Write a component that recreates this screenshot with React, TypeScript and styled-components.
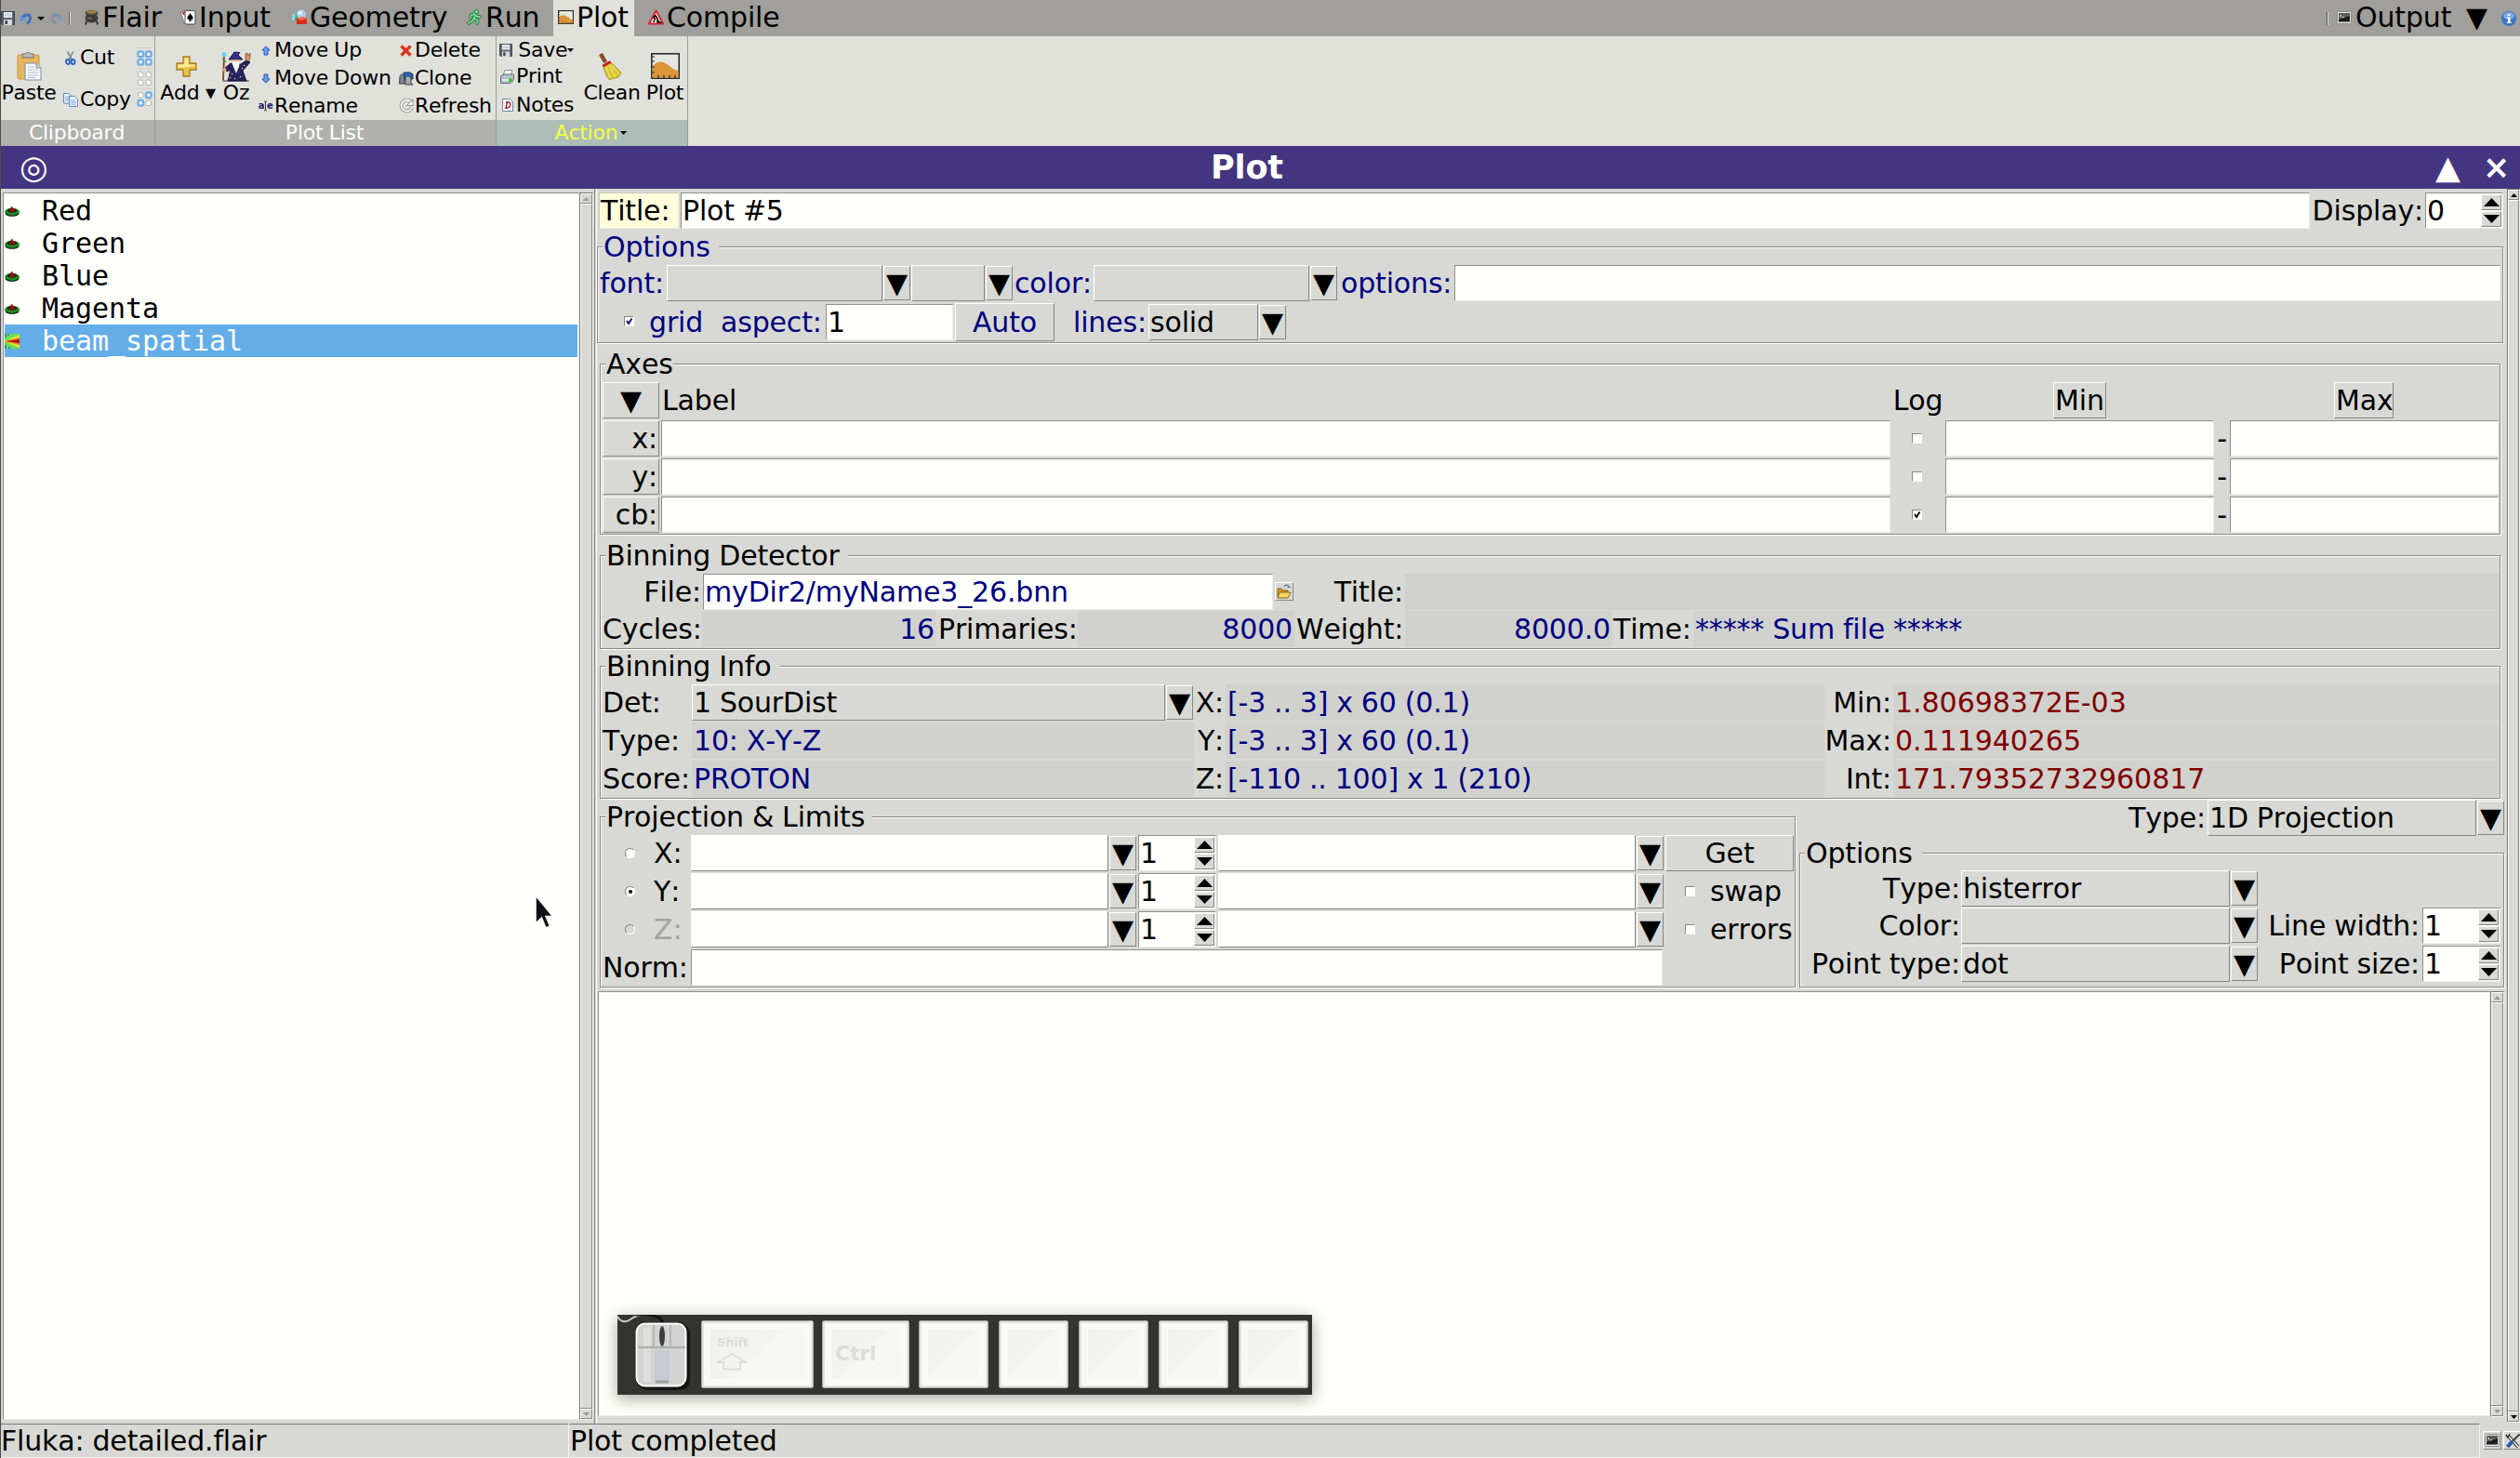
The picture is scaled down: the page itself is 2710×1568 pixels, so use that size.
import type { ReactNode } from 'react';
import styled, { createGlobalStyle, css } from 'styled-components';

const bg = '#d8d9d5';
const paper = '#fffffb';
const dark = '#868682';
const navy = '#000080';
const maroon = '#800000';

const GlobalStyle = createGlobalStyle`
  * {
    box-sizing: border-box;
  }

  body {
    margin: 0;
    background: ${bg};
    overflow: hidden;
  }
`;

type Box = {
  $w?: number;
  $ml?: number;
  $mt?: number;
  $h?: number;
  $color?: string;
  $right?: boolean;
  $center?: boolean;
};

const box = css<Box>`
  flex: none;
  ${({ $w }) => $w !== undefined && `width: ${$w}px;`}
  ${({ $h }) => $h !== undefined && `height: ${$h}px;`}
  margin-left: ${({ $ml }) => $ml ?? 0}px;
  margin-top: ${({ $mt }) => $mt ?? 0}px;
`;

const Window = styled.div`
  position: relative;
  display: flex;
  flex-direction: column;
  width: 2710px;
  height: 1568px;
  border-left: 1px solid #4a4a4a;
  background: ${bg};
  color: #000;
  font-family: 'DejaVu Sans', sans-serif;
  font-size: 30px;
  font-kerning: none;
  letter-spacing: -0.16px;
  word-spacing: -0.4px;
  line-height: 35px;
  white-space: pre;
`;

/* tabs */

const TabBar = styled.div`
  display: flex;
  align-items: center;
  height: 39px;
  padding-right: 4px;
  background: #a09f9b;
`;

const Tab = styled.div<{ $w: number; $ml?: number; $active?: boolean }>`
  display: flex;
  align-items: center;
  flex: none;
  width: ${({ $w }) => $w}px;
  height: 39px;
  margin-left: ${({ $ml }) => $ml ?? 0}px;
  padding: 0 0 2px 5px;
  gap: 3px;
  background: ${({ $active }) => ($active ? '#e1e1dc' : 'transparent')};
`;

const TabText = styled.div<Box>`
  ${box}
  padding-bottom: 2px;
`;

const Icon = styled.svg<Box>`
  display: block;
  ${box}
`;

const ArrowSlot = styled.div`
  display: flex;
  margin: 0 -1px 0 5px;
`;

const Separator = styled.div<Box>`
  ${box}
  width: 2px;
  height: 14px;
  border-left: 1px solid #555;
  border-right: 1px solid #e4e4e0;
`;

const Spacer = styled.div`
  flex: 1;
`;

/* ribbon */

const Ribbon = styled.div`
  display: flex;
  height: 118px;
  background: #e1e1dc;
  font-size: 22px;
  letter-spacing: -0.25px;
  line-height: 26px;
`;

const Group = styled.div<{ $w: number }>`
  display: flex;
  flex-direction: column;
  flex: none;
  width: ${({ $w }) => $w}px;
  border-right: 1px solid #9c9c98;
`;

const GroupBody = styled.div`
  display: flex;
  height: 90px;
`;

const GroupLabel = styled.div<{ $action?: boolean }>`
  display: flex;
  align-items: center;
  justify-content: center;
  gap: 3px;
  height: 28px;
  padding: 0 2px 1px 0;
  background: ${({ $action }) => ($action ? '#adbdb8' : '#b0b0ad')};
  color: ${({ $action }) => ($action ? '#f2ff3c' : paper)};
`;

const BigButton = styled.div<Box>`
  ${box}
  display: flex;
  flex-direction: column;
  align-items: center;
`;

const BigIcon = styled.div<{ $shift?: number }>`
  display: flex;
  align-items: center;
  justify-content: center;
  height: 34px;
  margin-top: 15px;
  margin-bottom: -1px;
  padding-right: ${({ $shift }) => $shift ?? 0}px;
`;

const ButtonColumn = styled.div<Box>`
  ${box}
  display: flex;
  flex-direction: column;
`;

const SmallButton = styled.div<Box>`
  ${box}
  display: flex;
  align-items: center;
  height: 26px;
`;

const IconSlot = styled.div<{ $w: number }>`
  display: flex;
  align-items: center;
  justify-content: center;
  flex: none;
  width: ${({ $w }) => $w}px;
`;

const SelectTool = styled.div`
  display: flex;
  align-items: center;
  justify-content: center;
  width: 18px;
  height: 22px;
  border-top: 1px solid #d2d2ce;
`;

/* title bar */

const TitleBar = styled.div`
  display: flex;
  align-items: center;
  height: 46px;
  background: #443580;
  color: ${paper};
  font-size: 35px;
  line-height: 41px;
`;

const TitleText = styled.div<Box>`
  ${box}
  font-weight: bold;
  ${({ $center }) => $center && 'text-align: center;'}
`;

const TitleGlyph = styled.div<Box>`
  ${box}
`;

/* body */

const Body = styled.div`
  display: flex;
  height: 1328px;
`;

const List = styled.div`
  width: 620px;
  height: 1320px;
  margin: 4px 0 0 2px;
  padding: 1px;
  border: 1px solid;
  border-color: #8f8f8b #ececea #ececea #8f8f8b;
  background: ${paper};
  font-family: 'DejaVu Sans Mono', monospace;
  letter-spacing: -0.06px;
  word-spacing: 0;
`;

const ListItem = styled.div<{ $selected?: boolean }>`
  display: flex;
  align-items: center;
  height: 35px;
  gap: 24px;
  background: ${({ $selected }) => ($selected ? '#63ade8' : 'transparent')};
  color: ${({ $selected }) => ($selected ? paper : '#000')};
`;

const Track = styled.div<Box>`
  ${box}
  display: flex;
  flex-direction: column;
  border: 1px solid;
  border-color: #777 #f4f4f0 #f4f4f0 #777;
  background: #c9cac6;
`;

const raised = css`
  border: 1px solid;
  border-color: ${paper} ${dark} ${dark} ${paper};
  background: ${bg};
`;

const TrackButton = styled.div`
  display: flex;
  align-items: center;
  justify-content: center;
  flex: none;
  height: 11px;
  ${raised}
`;

const Thumb = styled.div`
  flex: 1;
  ${raised}
`;

const Sash = styled.div`
  width: 3px;
  margin: 0 1px;
  border-left: 1px solid ${dark};
  border-right: 1px solid ${paper};
`;

const Pane = styled.div`
  display: flex;
  flex-direction: column;
  width: 2053px;
`;

const Row = styled.div<Box>`
  ${box}
  display: flex;
  height: ${({ $h }) => $h ?? 39}px;
`;

const Label = styled.div<Box>`
  ${box}
  height: 39px;
  padding: 2px 0;
  color: ${({ $color }) => $color ?? 'inherit'};
  text-align: ${({ $right, $center }) => ($right ? 'right' : $center ? 'center' : 'left')};
`;

const Entry = styled.div<Box>`
  ${box}
  height: ${({ $h }) => $h ?? 39}px;
  padding: 1px 1px;
  border: 1px solid;
  border-color: #8f8f8b #ececea #ececea #8f8f8b;
  background: ${paper};
  color: ${({ $color }) => $color ?? 'inherit'};
`;

const TitleLabel = styled(Entry)`
  background: #fffedb;
  border-color: #c9c9c0 #ecece0 #ecece0 #c9c9c0;
`;

const Value = styled.div<Box>`
  ${box}
  height: 39px;
  padding: 2px 2px;
  background: #d1d2ce;
  color: ${({ $color }) => $color ?? navy};
  text-align: ${({ $right }) => ($right ? 'right' : 'left')};
`;

const StatValue = styled(Value)`
  color: ${maroon};
  letter-spacing: -0.04px;
`;

const Button = styled.div<Box>`
  ${box}
  height: ${({ $h }) => $h ?? 39}px;
  padding: ${({ $h }) => (($h ?? 39) - 37) / 2}px 1px;
  ${raised}
  color: ${({ $color }) => $color ?? 'inherit'};
  text-align: ${({ $right }) => ($right ? 'right' : 'center')};
`;

const ComboText = styled.div<Box & { $edit?: boolean }>`
  ${box}
  height: 39px;
  padding: 1px 1px;
  ${raised}
  ${({ $edit }) => $edit && `background: ${paper};`}
`;

const ComboArrow = styled.div`
  flex: none;
  width: 29px;
  height: 37px;
  margin: 1px 0 0 1px;
  padding-left: 2px;
  ${raised}
`;

const SpinBox = styled(Entry)`
  display: flex;
  justify-content: space-between;
`;

const SpinButtons = styled.div`
  display: flex;
  flex-direction: column;
  width: 22px;
  gap: 1px;
`;

const SpinButton = styled.div`
  display: flex;
  align-items: center;
  justify-content: center;
  height: 17px;
  ${raised}
`;

const Frame = styled.div<Box>`
  ${box}
  border: 1px solid ${dark};
  box-shadow: inset 1px 1px ${paper}, 1px 1px ${paper};
`;

const Legend = styled.div<Box>`
  width: ${({ $w }) => $w}px;
  height: 35px;
  margin: -18px 0 2px 5px;
  padding-left: 1px;
  background: ${bg};
  color: ${({ $color }) => $color ?? 'inherit'};
`;

const CheckBox = styled.div<Box>`
  ${box}
  width: 11px;
  height: 11px;
  border: 1px solid;
  border-color: ${dark} ${paper} ${paper} ${dark};
  background: ${paper};
`;

const Radio = styled.div<Box & { $off?: boolean }>`
  ${box}
  display: flex;
  align-items: center;
  justify-content: center;
  width: 11px;
  height: 11px;
  border: 1px solid;
  border-color: ${dark} ${paper} ${paper} ${dark};
  border-radius: 50%;
  background: ${({ $off }) => ($off ? bg : paper)};
`;

const RadioDot = styled.div`
  width: 4px;
  height: 4px;
  border-radius: 50%;
  background: #000;
`;

const FileButton = styled.div`
  display: flex;
  width: 20px;
  height: 20px;
  margin: 9px 0 0 2px;
  ${raised}
`;

const Columns = styled.div`
  display: flex;
`;

const StyleColumn = styled.div`
  display: flex;
  flex-direction: column;
  width: 760px;
  margin-left: 4px;
`;

const StatusBar = styled.div`
  display: flex;
  height: 37px;
`;

const StatusField = styled.div<Box>`
  ${box}
  height: 37px;
  border: 1px solid;
  border-color: #777 #f4f4f0 #f4f4f0 ${bg};
  border-left-width: 0;
`;

const StatusButton = styled.div<Box>`
  ${box}
  display: flex;
  align-items: center;
  justify-content: center;
  width: 20px;
  height: 20px;
  ${raised}
`;

/* key monitor floating over the window */

const KeyMonitor = styled.div`
  position: absolute;
  left: 663px;
  top: 1414px;
  display: flex;
  width: 747px;
  height: 86px;
  background: #33342f;
  box-shadow: 0 4px 16px rgba(60, 60, 50, 0.45);
`;

const Key = styled.div<Box>`
  ${box}
  height: 73px;
  margin-top: 6px;
  padding: 15px 0 0 16px;
  border: 1px solid #a9aaa5;
  border-radius: 2px;
  background: linear-gradient(135deg, #efefec 0%, #f3f4ef 45%, #f7f8f3 52%, #f6f7f2 100%);
  box-shadow: inset 0 0 0 2px #e3e4df, inset 0 0 0 9px #f9faf5;
  color: #dddeda;
  font-size: 13px;
  font-weight: bold;
  line-height: 15px;
`;

const CtrlText = styled.div`
  padding-top: 7px;
  margin-left: -3px;
  font-size: 22px;
  line-height: 26px;
`;

const Pointer = styled.svg`
  position: absolute;
  left: 573px;
  top: 961px;
`;

const Triangle = ({ w, h, up, color = '#000' }: { w: number; h: number; up?: boolean; color?: string }) => (
  <svg width={w} height={h} viewBox="0 0 10 10" preserveAspectRatio="none">
    <path d={up ? 'M0 10L5 0L10 10Z' : 'M0 0H10L5 10Z'} fill={color} />
  </svg>
);

const Check = ({ color = '#000' }: { color?: string }) => (
  <Icon width="9" height="9" viewBox="0 0 9 9">
    <path d="M2 4L4 7L7.5 1.5" fill="none" stroke={color} strokeWidth="1.8" />
  </Icon>
);

const Combo = ({ w, ml, text, edit }: { w: number; ml?: number; text?: string; edit?: boolean }) => (
  <>
    <ComboText $w={w} $ml={ml} $edit={edit}>{text}</ComboText>
    <ComboArrow>▼</ComboArrow>
  </>
);

const Spin = ({ w, ml, value }: { w: number; ml?: number; value: string }) => (
  <SpinBox $w={w} $ml={ml}>
    {value}
    <SpinButtons>
      <SpinButton><Triangle w={17} h={9} up /></SpinButton>
      <SpinButton><Triangle w={17} h={9} /></SpinButton>
    </SpinButtons>
  </SpinBox>
);

const Scrollbar = ({ w, h, ml, mt, color }: { w: number; h: number; ml?: number; mt?: number; color: string }) => (
  <Track $w={w} $h={h} $ml={ml} $mt={mt}>
    <TrackButton><Triangle w={7} h={4} up color={color} /></TrackButton>
    <Thumb />
    <TrackButton><Triangle w={7} h={4} color={color} /></TrackButton>
  </Track>
);

/* icons */

const SaveIcon = ({ s = 15 }: { s?: number }) => (
  <Icon width={s} height={s} viewBox="0 0 15 15">
    <path d="M0.5 0.5H14.5V14.5H1.5L0.5 13.5Z" fill="#5b6068" stroke="#3c4046" />
    <rect x="3" y="1" width="9" height="6" fill="#f4f6f8" />
    <path d="M4 3H11M4 5H11" stroke="#9fb4c8" />
    <rect x="3" y="9" width="9" height="6" fill="#d5d8db" />
    <rect x="4.5" y="10" width="2.5" height="4" fill="#3c4046" />
  </Icon>
);

const UndoIcon = ({ redo }: { redo?: boolean }) => (
  <Icon width="14" height="14" viewBox="0 0 14 14" $ml={redo ? 7 : 5}>
    <g transform={redo ? 'matrix(-1 0 0 1 14 0)' : undefined} opacity={redo ? 0.75 : 1}>
      <path
        d="M3 7C5 2 11 1.5 11.5 6C12 9 10 11.5 7.5 12"
        fill="none"
        stroke={redo ? '#6584ac' : '#3c6fc4'}
        strokeWidth="3"
        strokeDasharray={redo ? '2 1' : undefined}
      />
      <path d="M0.5 3L1 10L7.5 8Z" fill={redo ? '#7c9cc0' : '#5e93e0'} />
    </g>
  </Icon>
);

const PotIcon = () => (
  <Icon width="17" height="17" viewBox="0 0 17 17">
    <path d="M3 13L2 16.5M14 13L15 16.5" stroke="#222" strokeWidth="1.8" />
    <path d="M1.5 4H15.500L14 6.5C17 9 15 14.500 8.500 14.500C2 14.500 0 9 3 6.500Z" fill="#3b3a35" />
    <ellipse cx="8.5" cy="3.500" rx="7" ry="2.500" fill="#55534a" />
    <ellipse cx="8.5" cy="3" rx="5" ry="1.500" fill="#a0823a" />
    <path d="M3.500 9.500H9" stroke="#77756c" strokeWidth="1.500" />
  </Icon>
);

const CardsIcon = () => (
  <Icon width="17" height="17" viewBox="0 0 17 17">
    <path d="M0.5 3L7 0.5L9 13L4 15Z" fill="#fff" stroke="#444" strokeWidth="0.6" />
    <path d="M1.5 3.5L5 2L4 7Z" fill="#d3202f" />
    <rect x="5" y="1.5" width="11" height="14.5" rx="1.5" fill="#fff" stroke="#222" strokeWidth="0.8" />
    <path d="M10.5 4C12 7 14 7.5 13.5 10C13 11.5 11.5 11.5 11 10.5L11.8 13H9.2L10 10.5C9.5 11.5 8 11.5 7.5 10C7 7.5 9 7 10.5 4Z" fill="#000" />
  </Icon>
);

const GeometryIcon = () => (
  <Icon width="17" height="17" viewBox="0 0 17 17">
    <path d="M1 6L5 4L8 6V13L1 12Z" fill="#37b24a" />
    <path d="M1 6L5 4L4 12L1 12Z" fill="#8ed0e8" />
    <circle cx="11" cy="5.5" r="5" fill="#a8d4f2" />
    <circle cx="9.5" cy="4" r="2" fill="#e6f5ff" />
    <path d="M6 10L12 8L17 10V16H6Z" fill="#dd2c1c" />
    <path d="M6 10L12 8L17 10L11 12Z" fill="#ff6a4c" />
  </Icon>
);

const RunIcon = () => (
  <Icon width="17" height="17" viewBox="0 0 17 17">
    <g fill="none" strokeLinecap="round" strokeLinejoin="round">
      <path d="M9 5L8 10L12 12L11 15M8 10L5 13L2 15M9 5L5 6L4 9M9 5L11 8L14 8" stroke="#276b3c" strokeWidth="3.4" />
      <path d="M9 5L8 10L12 12L11 15M8 10L5 13L2 15M9 5L5 6L4 9M9 5L11 8L14 8" stroke="#6fdc92" strokeWidth="1.9" />
    </g>
    <circle cx="10.5" cy="2.5" r="2.2" fill="#6fdc92" stroke="#276b3c" strokeWidth="0.8" />
  </Icon>
);

const PlotIcon = ({ w = 17, h = 15 }: { w?: number; h?: number }) => (
  <Icon width={w} height={h} viewBox="0 0 31 28" preserveAspectRatio="none">
    <rect x="0.8" y="0.8" width="29.4" height="26.4" fill="#e6e6e2" stroke="#222" strokeWidth={w < 20 ? 2.4 : 1.5} />
    <path d="M1.5 15C6 9 11 8 17 12C22 15 25 19 29.5 19V26.5H1.5Z" fill="#dc9537" />
    <path d="M1 9H4M1 15H4M1 21H4M8 27V24M14 27V24M20 27V24M26 27V24M1 4H4" stroke="#222" strokeWidth="1.2" />
  </Icon>
);

const CompileIcon = () => (
  <Icon width="17" height="17" viewBox="0 0 17 17">
    <path d="M8.5 1.5L16 15.5H1Z" fill="#fff" stroke="#d8242a" strokeWidth="2" strokeLinejoin="round" />
    <path d="M8 6L6 9L7.5 10.5L5.5 14M8 7L10 10L11 14M10 12L13 14H10Z" fill="none" stroke="#000" strokeWidth="1.5" />
  </Icon>
);

const TerminalIcon = ({ s = 16, ml }: { s?: number; ml?: number }) => (
  <Icon width={s} height={s * 0.88} viewBox="0 0 16 14" $ml={ml}>
    <rect x="0.5" y="0.5" width="15" height="13" rx="1" fill="#e8e8e6" stroke="#888" />
    <rect x="2" y="2" width="12" height="9.5" fill="#1c1e1c" />
    <path d="M2 2H14V5L2 9Z" fill="#5a5c5a" />
    <path d="M3.5 4L5 5L3.5 6M6 6.5H8" stroke="#fff" strokeWidth="0.8" fill="none" />
  </Icon>
);

const InfoIcon = () => (
  <Icon width="16" height="16" viewBox="0 0 16 16">
    <circle cx="8" cy="8" r="8" fill="#3f74c4" />
    <ellipse cx="8" cy="5" rx="6" ry="4" fill="#7fa9e2" />
    <path d="M7 3H9.5V5H7ZM6 6.5H9.5V11.5H10.5V13H6V11.5H7V8H6Z" fill="#fff" />
  </Icon>
);

const PasteIcon = () => (
  <Icon width="27" height="31" viewBox="0 0 27 31">
    <rect x="1" y="3" width="23" height="26" rx="1.5" fill="#e6b75a" stroke="#c8923a" />
    <path d="M6 2H9C10 -0.3 14 -0.3 15 2H18V6H6Z" fill="#b9bbb8" stroke="#6e706d" />
    <path d="M9 12H21L26 17V30H9Z" fill="#f3f6f8" stroke="#7a8fa0" />
    <path d="M21 12V17H26" fill="#cfdbe4" stroke="#7a8fa0" />
    <path d="M12 16H19M12 19H23M12 22H23M12 25H23M12 27.5H20" stroke="#b4c3cf" />
  </Icon>
);

const CutIcon = () => (
  <Icon width="12" height="15" viewBox="0 0 12 15">
    <path d="M2.5 0.5L7.5 9.5M8.5 0.5L4 9.5" stroke="#7b8892" strokeWidth="1.6" />
    <ellipse cx="3" cy="11.5" rx="2" ry="2.5" fill="none" stroke="#2f62c0" strokeWidth="1.9" />
    <ellipse cx="8.5" cy="11.5" rx="2" ry="2.5" fill="none" stroke="#2f62c0" strokeWidth="1.9" />
  </Icon>
);

const CopyIcon = () => (
  <Icon width="17" height="15" viewBox="0 0 17 15">
    <path d="M0.5 0.5H6L9 3.5V11H0.5Z" fill="#eef4fb" stroke="#5f86c0" />
    <path d="M2 4H6M2 6H6M2 8H6" stroke="#7fa3d6" />
    <path d="M6.5 3.5H12L15.5 7V14.5H6.5Z" fill="#eef4fb" stroke="#5f86c0" />
    <path d="M8 8H13M8 10H14M8 12H14" stroke="#7fa3d6" />
  </Icon>
);

const SquaresIcon = ({ on }: { on: number[] }) => (
  <Icon width="17" height="17" viewBox="0 0 17 17">
    {[0, 1, 2, 3].map((i) => {
      const active = on.includes(i);
      return (
        <rect
          key={i}
          x={(i % 2) * 8.5 + 1.5}
          y={Math.floor(i / 2) * 8.5 + 1.5}
          width="5.5"
          height="5.5"
          rx="1.5"
          fill="#fff"
          stroke={active ? '#74aee6' : '#b0b0ac'}
          strokeWidth={active ? 2.4 : 1}
        />
      );
    })}
  </Icon>
);

const AddIcon = () => (
  <Icon width="23" height="23" viewBox="0 0 23 23">
    <path d="M8 1H15V8H22V15H15V22H8V15H1V8H8Z" fill="#ecc347" stroke="#a57b1c" strokeWidth="1.3" />
    <path d="M9.5 2.5H13.5V9.5H20.5V11L2.5 13V9.5H9.5Z" fill="#fbeea4" />
  </Icon>
);

const WizardIcon = () => (
  <Icon width="32" height="33" viewBox="0 0 32 33">
    <path d="M3 6L2 31" stroke="#7d4a20" strokeWidth="1.8" />
    <circle cx="3" cy="3.5" r="2.5" fill="#63d5ea" />
    <path d="M1 8L5 12" stroke="#3b9b46" strokeWidth="1.5" />
    <path d="M1 32H30" stroke="#555" strokeWidth="1.2" />
    <path d="M10 13L4 18L6 22L10 20L7 32H27L23 21L31 12L28 9L21 14Z" fill="#262260" stroke="#0c0a2c" strokeWidth="0.8" />
    <path d="M8 9L14 1L20 1.5L18 4L23 9Z" fill="#34308a" stroke="#0c0a2c" strokeWidth="0.8" />
    <path d="M11 9H20V13H11Z" fill="#e0ab84" />
    <path d="M11 11L20 11L19 17L16 24L13 17Z" fill="#f2f2f2" />
    <path d="M26 9L26 3L28 2L29 5L31 2V8L29 11Z" fill="#d89b6c" stroke="#593312" strokeWidth="0.6" />
    <circle cx="3.5" cy="20" r="2" fill="#e0ab84" />
    <path d="M11 24L12 25M20 27L21 28M22 18L23 19M14 29L15 30M24 16L25 15M9 28L10 29" stroke="#e0d25a" strokeWidth="1.3" />
  </Icon>
);

const ArrowIcon = ({ down }: { down?: boolean }) => (
  <Icon width="10" height="11" viewBox="0 0 10 11">
    <path
      d="M5 0.8L9.2 5H7V10H3V5H0.8Z"
      transform={down ? 'rotate(180 5 5.5)' : undefined}
      fill="#6f9bea"
      stroke="#2c57b4"
    />
  </Icon>
);

const RenameMark = styled.span`
  color: #1c1c66;
  font-size: 10px;
  font-weight: bold;
  letter-spacing: -0.5px;
  line-height: 14px;
`;

const RenameIcon = () => (
  <>
    <RenameMark>a</RenameMark>
    <Icon width="3" height="14" viewBox="0 0 4 14">
      <path d="M0 0.5H1.5L2 1V13L1.5 13.5H0M4 0.5H2.5L2 1M2 13L2.5 13.5H4" fill="none" stroke="#000" />
    </Icon>
    <RenameMark>e</RenameMark>
  </>
);

const DeleteIcon = () => (
  <Icon width="13" height="13" viewBox="0 0 13 13">
    <path d="M1.5 1.5L11.5 11.5M11.5 1.5L1.5 11.5" stroke="#d8341c" strokeWidth="3.4" />
  </Icon>
);

const CloneIcon = () => (
  <Icon width="16" height="16" viewBox="0 0 16 16">
    <path d="M1 7C1 3 6 3 6 7V14H0.5Z" fill="#7d8a96" stroke="#333d46" />
    <path d="M5 2H12L15 4V9H6Z" fill="#2c66b8" stroke="#1a3560" />
    <path d="M7 8C7 5 13 5 13 9V14L15 15H7Z" fill="#a8adb2" stroke="#333d46" />
  </Icon>
);

const RefreshIcon = () => (
  <Icon width="16" height="16" viewBox="0 0 16 16">
    <path d="M13 3.5A6 6 0 1 0 14 10" fill="none" stroke="#8a8a86" strokeWidth="3.6" />
    <path d="M13 3.5A6 6 0 1 0 14 10" fill="none" stroke="#fff" strokeWidth="1.8" />
    <path d="M15 1V7.5H8.5Z" fill="#fff" stroke="#8a8a86" />
  </Icon>
);

const PrintIcon = () => (
  <Icon width="15" height="15" viewBox="0 0 15 15">
    <path d="M5 0.5H13L11 6H3Z" fill="#f4f8fc" stroke="#7f93a8" />
    <path d="M0.5 7L4 5H14.5V11L11 14.5H0.5Z" fill="#b7c0c8" stroke="#5c6a76" />
    <path d="M2 11H9" stroke="#f5f7f9" strokeWidth="1.5" />
    <rect x="9" y="9.5" width="4" height="3.5" fill="#36c437" />
  </Icon>
);

const NotesIcon = () => (
  <Icon width="12" height="14" viewBox="0 0 12 14">
    <path d="M0.5 0.5H8.5L11.5 3.5V13.5H0.5Z" fill="#f6f9fc" stroke="#6d88a6" />
    <path d="M4 4C8 3 10 5 8.5 8C7.5 10 5 10.5 3 10.3M5.5 4L4 10.5" fill="none" stroke="#a31526" strokeWidth="1.3" />
  </Icon>
);

const BroomIcon = () => (
  <Icon width="26" height="29" viewBox="0 0 26 29">
    <path d="M3 1L8 10" stroke="#8a4a20" strokeWidth="4.5" />
    <path d="M5 13L13 9L25 21L22 26L12 28.5L9 24Z" fill="#d8c832" stroke="#8d8116" strokeWidth="0.8" />
    <path d="M9 15L13 27M12 13L19 26M14 12L23 23" stroke="#f6ec82" />
    <path d="M5.5 14L13.5 9.5" stroke="#c91c24" strokeWidth="3" />
  </Icon>
);

const SaladIcon = () => (
  <Icon width="16" height="12" viewBox="0 0 16 12">
    <ellipse cx="8" cy="7" rx="8" ry="4.3" fill="#1e8a24" />
    <ellipse cx="8" cy="5.5" rx="5.5" ry="2.2" fill="#0a2c0c" />
    <path d="M1 9C4 12 12 12 15 9" fill="none" stroke="#0a2c0c" strokeWidth="1.2" />
    <path d="M5 7L6 3L8 0.5L9 3L11 3.5V7H5Z" fill="#8e1014" />
  </Icon>
);

const BeamIcon = () => (
  <Icon width="16" height="16" viewBox="0 0 16 16">
    <rect width="16" height="16" fill="#6ee04c" />
    <path d="M0 0H2V4H0ZM0 12H2V16H0ZM3 0H5V2H3ZM4 14H6V16H4Z" fill="#2c8fa8" />
    <path d="M0 8L16 1V15Z" fill="#f0e23a" />
    <path d="M0 8L16 4V12Z" fill="#f07c22" />
    <path d="M1 8L16 6V10Z" fill="#a8141c" />
  </Icon>
);

const FolderIcon = () => (
  <Icon width="18" height="18" viewBox="0 0 18 18">
    <path d="M2 6H6L7 8H13V15H2Z" fill="#d79d20" stroke="#8a640e" />
    <path d="M4 10H16L13 16H2Z" fill="#f6d766" stroke="#8a640e" />
    <path d="M9 4C11 1 14 2 14.5 5M12.5 4.5H16" fill="none" stroke="#5a6a80" strokeWidth="1.2" />
  </Icon>
);

const ToolsIcon = () => (
  <Icon width="17" height="17" viewBox="0 0 17 17">
    <path d="M4 4L14 15" stroke="#222" strokeWidth="3.4" />
    <path d="M3 3L14 15" stroke="#f2f2f2" strokeWidth="1.8" />
    <path d="M1 2L3 5L5 1" fill="none" stroke="#222" strokeWidth="1.4" />
    <path d="M15.5 1.5L8 9" stroke="#333" strokeWidth="1.8" />
    <path d="M8 9L2.5 15" stroke="#2c57a8" strokeWidth="4" />
  </Icon>
);

const Tool = ({ icon, slot = 19, label, mt, ml, children }: {
  icon: ReactNode;
  slot?: number;
  label: string;
  mt?: number;
  ml?: number;
  children?: ReactNode;
}) => (
  <SmallButton $mt={mt} $ml={ml}>
    <IconSlot $w={slot}>{icon}</IconSlot>
    {label}
    {children}
  </SmallButton>
);

const plots = ['Red', 'Green', 'Blue', 'Magenta'];

const axes = [
  { name: 'x:', log: false },
  { name: 'y:', log: false },
  { name: 'cb:', log: true },
];

const projections = [
  { name: 'X:', on: false, off: false },
  { name: 'Y:', on: true, off: false },
  { name: 'Z:', on: false, off: true },
];

const info = [
  { left: 'Type:', leftValue: '10: X-Y-Z', axis: 'Y:', range: '[-3 .. 3] x 60 (0.1)', stat: 'Max:', statValue: '0.111940265' },
  { left: 'Score:', leftValue: 'PROTON', axis: 'Z:', range: '[-110 .. 100] x 1 (210)', stat: 'Int:', statValue: '171.79352732960817' },
];

function Tabs() {
  return (
    <TabBar>
      <SaveIcon />
      <UndoIcon />
      <ArrowSlot><Triangle w={8} h={4} /></ArrowSlot>
      <UndoIcon redo />
      <Separator $ml={6} />
      <Tab $w={104} $ml={9}><PotIcon />Flair</Tab>
      <Tab $w={119}><CardsIcon />Input</Tab>
      <Tab $w={189}><GeometryIcon />Geometry</Tab>
      <Tab $w={98}><RunIcon />Run</Tab>
      <Tab $w={87} $active><PlotIcon />Plot</Tab>
      <Tab $w={160} $ml={10}><CompileIcon />Compile</Tab>
      <Spacer />
      <Separator />
      <TerminalIcon s={16} ml={9} />
      <TabText $w={119} $ml={4}>Output</TabText>
      <TabText $w={38}>▼</TabText>
      <InfoIcon />
    </TabBar>
  );
}

function RibbonPanel() {
  return (
    <Ribbon>
      <Group $w={166}>
        <GroupBody>
          <BigButton $w={60}>
            <BigIcon><PasteIcon /></BigIcon>
            Paste
          </BigButton>
          <ButtonColumn $w={85}>
            <Tool icon={<CutIcon />} label="Cut" slot={20} ml={5} mt={10} />
            <Tool icon={<CopyIcon />} label="Copy" slot={20} ml={5} mt={19} />
          </ButtonColumn>
          <ButtonColumn $mt={12}>
            <SelectTool><SquaresIcon on={[0, 1, 2, 3]} /></SelectTool>
            <SelectTool><SquaresIcon on={[]} /></SelectTool>
            <SelectTool><SquaresIcon on={[1, 2]} /></SelectTool>
          </ButtonColumn>
        </GroupBody>
        <GroupLabel>Clipboard</GroupLabel>
      </Group>
      <Group $w={367}>
        <GroupBody>
          <BigButton $w={66} $ml={2}>
            <BigIcon $shift={3}><AddIcon /></BigIcon>
            Add ▾
          </BigButton>
          <BigButton $w={34} $ml={2}>
            <BigIcon><WizardIcon /></BigIcon>
            Oz
          </BigButton>
          <ButtonColumn $w={151} $ml={5}>
            <Tool icon={<ArrowIcon />} label="Move Up" mt={2} />
            <Tool icon={<ArrowIcon down />} label="Move Down" mt={4} />
            <Tool icon={<RenameIcon />} label="Rename" mt={4} />
          </ButtonColumn>
          <ButtonColumn>
            <Tool icon={<DeleteIcon />} label="Delete" mt={2} />
            <Tool icon={<CloneIcon />} label="Clone" mt={4} />
            <Tool icon={<RefreshIcon />} label="Refresh" mt={4} />
          </ButtonColumn>
        </GroupBody>
        <GroupLabel>Plot List</GroupLabel>
      </Group>
      <Group $w={206}>
        <GroupBody>
          <ButtonColumn $w={91} $ml={2}>
            <Tool icon={<SaveIcon s={14} />} label=" Save" slot={15} mt={2}>
              <Triangle w={7} h={4} />
            </Tool>
            <Tool icon={<PrintIcon />} label="Print" mt={2} />
            <Tool icon={<NotesIcon />} label="Notes" mt={5} />
          </ButtonColumn>
          <BigButton $w={62}>
            <BigIcon $shift={4}><BroomIcon /></BigIcon>
            Clean
          </BigButton>
          <BigButton $w={42} $ml={5}>
            <BigIcon><PlotIcon w={31} h={28} /></BigIcon>
            Plot
          </BigButton>
        </GroupBody>
        <GroupLabel $action>
          Action
          <Triangle w={7} h={4} />
        </GroupLabel>
      </Group>
    </Ribbon>
  );
}

function OptionsFrame() {
  return (
    <Frame $w={2050} $h={104} $mt={19} $ml={-1}>
      <Legend $w={125} $color={navy}>Options</Legend>
      <Row>
        <Label $w={72} $ml={2} $color={navy}>font:</Label>
        <Combo w={232} />
        <Combo w={79} ml={1} />
        <Label $w={85} $ml={2} $color={navy}>color:</Label>
        <Combo w={232} />
        <Label $w={122} $ml={4} $color={navy}>options:</Label>
        <Entry $w={1125} />
      </Row>
      <Row $mt={2} $h={41}>
        <CheckBox $ml={28} $mt={14}><Check color={navy} /></CheckBox>
        <Label $w={77} $ml={16} $mt={1} $color={navy}>grid</Label>
        <Label $w={113} $mt={1} $color={navy}>aspect:</Label>
        <Entry $w={137} $mt={1}>1</Entry>
        <Button $w={107} $ml={2} $h={41} $color={navy}>Auto</Button>
        <Label $w={81} $ml={20} $mt={1} $color={navy}>lines:</Label>
        <Row $mt={1}>
          <Combo w={118} text="solid" />
        </Row>
      </Row>
    </Frame>
  );
}

function AxesFrame() {
  return (
    <Frame $w={2044} $h={184} $mt={22} $ml={2}>
      <Legend $w={73}>Axes</Legend>
      <Row>
        <Button $w={61} $ml={2}>▼</Button>
        <Label $w={1322} $ml={3}>Label</Label>
        <Label $w={57} $center>Log</Label>
        <Button $w={57} $ml={117}>Min</Button>
        <Button $w={64} $ml={245}>Max</Button>
      </Row>
      {axes.map(({ name, log }) => (
        <Row key={name} $mt={2}>
          <Button $w={61} $ml={2} $right>{name}</Button>
          <Entry $w={1322} $ml={2} />
          <CheckBox $ml={23} $mt={14}>{log && <Check />}</CheckBox>
          <Entry $w={289} $ml={25} />
          <Label $w={17} $center>-</Label>
          <Entry $w={289} />
        </Row>
      ))}
    </Frame>
  );
}

function DetectorFrame() {
  return (
    <Frame $w={2044} $h={101} $mt={22} $ml={2}>
      <Legend $w={261}>Binning Detector</Legend>
      <Row>
        <Label $w={108} $right>File:</Label>
        <Entry $w={613} $ml={2} $color={navy}>myDir2/myName3_26.bnn</Entry>
        <FileButton><FolderIcon /></FileButton>
        <Label $w={118} $right>Title:</Label>
        <Value $w={1176} $ml={2} />
      </Row>
      <Row $mt={1}>
        <Label $w={107} $ml={2}>Cycles:</Label>
        <Value $w={252} $right>16</Value>
        <Label $w={151} $ml={2}>Primaries:</Label>
        <Value $w={233} $ml={-1} $right>8000</Value>
        <Label $w={117} $ml={2}>Weight:</Label>
        <Value $w={223} $right>8000.0</Value>
        <Label $w={86} $ml={1}>Time:</Label>
        <Value $w={866}>***** Sum file *****</Value>
      </Row>
    </Frame>
  );
}

function InfoFrame() {
  return (
    <Frame $w={2044} $h={143} $mt={18} $ml={2}>
      <Legend $w={188}>Binning Info</Legend>
      <Row>
        <Label $w={96} $ml={2}>Det:</Label>
        <Combo w={509} text="1 SourDist" />
        <Label $w={33} $right>X:</Label>
        <Value $w={644} $ml={2}>[-3 .. 3] x 60 (0.1)</Value>
        <Label $w={72} $right>Min:</Label>
        <StatValue $w={651} $ml={2}>1.80698372E-03</StatValue>
      </Row>
      {info.map((row) => (
        <Row key={row.left} $mt={2}>
          <Label $w={96} $ml={2}>{row.left}</Label>
          <Value $w={540}>{row.leftValue}</Value>
          <Label $w={32} $right>{row.axis}</Label>
          <Value $w={644} $ml={2}>{row.range}</Value>
          <Label $w={72} $right>{row.stat}</Label>
          <StatValue $w={651} $ml={2}>{row.statValue}</StatValue>
        </Row>
      ))}
    </Frame>
  );
}

function ProjectionFrame() {
  return (
    <Frame $w={1286} $h={184} $mt={19} $ml={2}>
      <Legend $w={287}>{'Projection & Limits'}</Legend>
      {projections.map(({ name, on, off }, i) => (
        <Row key={name} $mt={i ? 2 : 0}>
          <Radio $ml={26} $mt={14} $off={off}>{on && <RadioDot />}</Radio>
          <Label $w={40} $ml={20} $color={off ? '#a3a3a0' : undefined}>{name}</Label>
          <Combo w={449} edit />
          <Spin w={84} ml={2} value="1" />
          <Combo w={449} ml={2} edit />
          {i === 0 && <Button $w={138} $ml={2}>Get</Button>}
          {i > 0 && (
            <>
              <CheckBox $ml={23} $mt={14} />
              <Label $ml={16}>{i === 1 ? 'swap' : 'errors'}</Label>
            </>
          )}
        </Row>
      ))}
      <Row $mt={2}>
        <Label $w={95} $ml={2}>Norm:</Label>
        <Entry $w={1045} />
      </Row>
    </Frame>
  );
}

function StylePanel() {
  return (
    <StyleColumn>
      <Row $mt={1}>
        <Label $w={437} $right>Type:</Label>
        <Combo w={289} ml={2} text="1D Projection" />
      </Row>
      <Frame $w={758} $h={145} $mt={18}>
        <Legend $w={126}>Options</Legend>
        <Row $mt={-1}>
          <Label $w={172} $right>Type:</Label>
          <Combo w={289} ml={1} text="histerror" />
        </Row>
        <Row $mt={1}>
          <Label $w={172} $right>Color:</Label>
          <Combo w={289} ml={1} />
          <Label $w={174} $right>Line width:</Label>
          <Spin w={84} ml={3} value="1" />
        </Row>
        <Row $mt={2}>
          <Label $w={172} $right>Point type:</Label>
          <Combo w={289} ml={1} text="dot" />
          <Label $w={174} $right>Point size:</Label>
          <Spin w={84} ml={3} value="1" />
        </Row>
      </Frame>
    </StyleColumn>
  );
}

function Keys() {
  return (
    <KeyMonitor>
      <Icon width="78" height="86" viewBox="0 0 78 86">
        <path d="M0 2C4 9 10 8 14 5C22 -1 34 -2 43 1" fill="none" stroke="#cfd0cc" strokeWidth="2" />
        <path d="M20 0C38 -2 48 2 49 10" fill="none" stroke="#111" strokeWidth="3" />
        <rect x="22" y="10" width="56" height="71" rx="10" fill="#151513" />
        <rect x="19" y="8" width="56" height="70" rx="10" fill="#111" />
        <rect x="20.5" y="9.5" width="53" height="67" rx="9" fill="#d3d4d2" stroke="#fff" strokeWidth="2" />
        <path d="M40 38H56V72H40Z" fill="#c9cad2" />
        <path d="M28 14V72H36V14Z" fill="#dfe0de" />
        <path d="M22 35H73" stroke="#aeb2ae" strokeWidth="2.5" />
        <path d="M39 11V34M57 11V34" stroke="#b3b8b5" strokeWidth="2" />
        <ellipse cx="48" cy="23" rx="3" ry="11" fill="#3b403f" />
        <path d="M41 72H55" stroke="#98a29e" strokeWidth="3" />
      </Icon>
      <Key $w={121} $ml={12}>
        Shift
        <Icon width="36" height="20" viewBox="0 0 36 20" $mt={3} $ml={-2}>
          <path d="M18 2L33 11H27V18.5H9V11H3Z" fill="none" stroke="#dddeda" strokeWidth="2" />
        </Icon>
      </Key>
      <Key $w={94} $ml={9}><CtrlText>Ctrl</CtrlText></Key>
      <Key $w={75} $ml={10} />
      <Key $w={75} $ml={11} />
      <Key $w={75} $ml={11} />
      <Key $w={75} $ml={11} />
      <Key $w={75} $ml={11} />
    </KeyMonitor>
  );
}

export default function App() {
  return (
    <>
      <GlobalStyle />
      <Window>
        <Tabs />
        <RibbonPanel />
        <TitleBar>
          <TitleGlyph $w={60} $ml={20}>◎</TitleGlyph>
          <TitleText $w={2520} $center>Plot</TitleText>
          <TitleGlyph $w={51} $ml={18}>▲</TitleGlyph>
          <TitleText>×</TitleText>
        </TitleBar>
        <Body>
          <List>
            {plots.map((name) => (
              <ListItem key={name}><SaladIcon />{name}</ListItem>
            ))}
            <ListItem $selected><BeamIcon />beam_spatial</ListItem>
          </List>
          <Scrollbar w={15} h={1320} mt={4} color="#999" />
          <Sash />
          <Pane>
            <Row $mt={4}>
              <TitleLabel $w={86} $ml={1}>Title:</TitleLabel>
              <Entry $w={1752} $ml={2}>Plot #5</Entry>
              <Label $w={120} $ml={2} $right>Display:</Label>
              <Spin w={84} ml={2} value="0" />
            </Row>
            <OptionsFrame />
            <AxesFrame />
            <DetectorFrame />
            <InfoFrame />
            <Columns>
              <ProjectionFrame />
              <StylePanel />
            </Columns>
            <Row $mt={4} $h={458}>
              <Entry $w={2035} $h={457} />
              <Scrollbar w={15} h={458} color="#999" />
            </Row>
          </Pane>
          <Scrollbar w={14} h={1327} color="#000" />
        </Body>
        <StatusBar>
          <StatusField $w={611}>Fluka: detailed.flair</StatusField>
          <StatusField $w={2054} $ml={1}>Plot completed</StatusField>
          <StatusButton $ml={3} $mt={8}><TerminalIcon s={16} /></StatusButton>
          <StatusButton $ml={2} $mt={8}><ToolsIcon /></StatusButton>
        </StatusBar>
        <Keys />
        <Pointer width="22" height="40" viewBox="0 0 22 40">
          <path d="M2 2V32L8.5 26L13 37L17.5 35L13 24.5H20.5Z" fill="#111" stroke="#fff" strokeWidth="1.5" />
        </Pointer>
      </Window>
    </>
  );
}
